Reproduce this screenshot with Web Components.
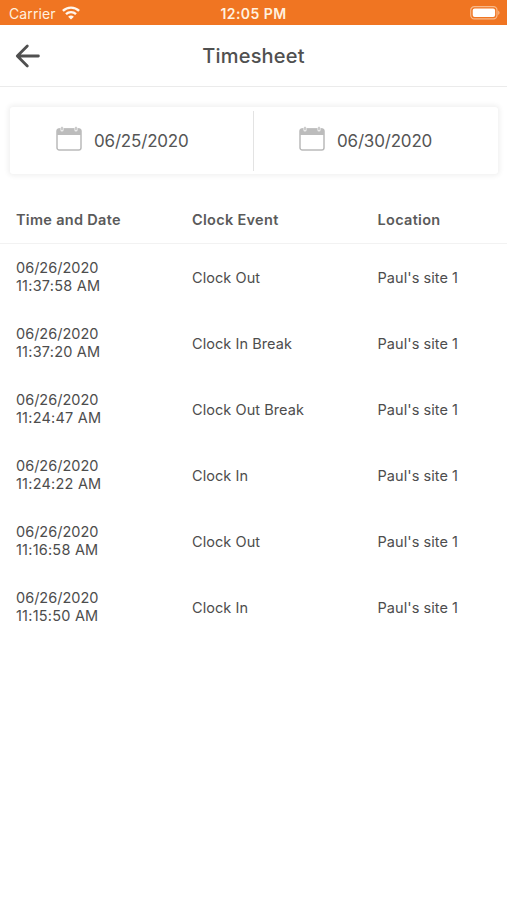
<!DOCTYPE html>
<html lang="en">
<head>
<meta charset="utf-8">
<title>Timesheet</title>
<style>
html, body { margin: 0; height: 100%; background: #fff; }
body { font-family: Inter, "Liberation Sans", sans-serif; color: #505050; overflow: hidden; }
</style>
</head>
<body>
<timesheet-app></timesheet-app>
<script>
const define = (name, html) => customElements.define(name, class extends HTMLElement {
  constructor() {
    super();
    this.attachShadow({ mode: 'open' }).innerHTML = html;
  }
});

define('status-bar', `
<style>
:host { display: grid; grid-template-columns: 1fr auto 1fr; align-items: center; height: 25px; padding: 1px 7px 0 9px; box-sizing: border-box; background: #f07522; color: #fff0df; font-size: 14px; }
.left { display: flex; align-items: center; gap: 6px; letter-spacing: .1px; }
.time { font-weight: 600; font-size: 14px; letter-spacing: .45px; padding: 1px 2px 0 0; }
.battery { justify-self: end; display: block; }
svg { display: block; }
</style>
<div class="left"><span>Carrier</span>
<svg width="18" height="14" viewBox="0 0 18 14" fill="none" stroke="#fff7ee" stroke-width="2.4"><path d="M.9 4.9a11.6 11.6 0 0 1 16.2 0M4 8.1a7.2 7.2 0 0 1 10 0"/><path d="M9 13.6 6.1 10.8a4.2 4.2 0 0 1 5.8 0Z" fill="#fff7ee" stroke="none"/></svg></div>
<span class="time">12:05 PM</span>
<svg class="battery" width="30" height="14" viewBox="0 0 30 14"><rect x=".7" y=".7" width="26.3" height="12.2" rx="3.6" fill="none" stroke="#f8b98b" stroke-width="1.2"/><rect x="2.7" y="2.6" width="22.4" height="8.4" rx="2" fill="#fff"/><path d="M28.2 4.6c1.8.7 1.8 3.8 0 4.5z" fill="#f8b98b"/></svg>`);

define('nav-header', `
<style>
:host { display: grid; grid-template-columns: 1fr auto 1fr; align-items: center; height: 62px; padding: 0 15px; box-sizing: border-box; border-bottom: 1px solid #ebebeb; }
svg { display: block; }
h1 { margin: 0; font-size: 20px; font-weight: 500; line-height: 24px; letter-spacing: .22px; color: #505050; }
</style>
<svg width="26" height="24" viewBox="0 0 26 24" fill="none" stroke="#505050" stroke-width="2.8" stroke-linecap="round" stroke-linejoin="round"><path d="M12.3 2 2.3 12l10 10M2.6 12h20.8"/></svg>
<h1><slot></slot></h1>`);

define('date-field', `
<style>
:host { display: flex; align-items: center; gap: 12px; padding-left: 46px; box-sizing: border-box; font-size: 17px; line-height: 22px; letter-spacing: -.18px; color: #555; }
svg { display: block; margin-bottom: 5px; }
</style>
<svg width="26" height="25" viewBox="0 0 26 25"><rect x="1" y="3" width="24" height="21" rx="2.3" fill="#fff" stroke="#bababa" stroke-width="1.5"/><path d="M1 9V5a2.4 2.4 0 0 1 2.4-2.4h19.2A2.4 2.4 0 0 1 25 5v4z" fill="#bcbcbc"/><g stroke-linecap="round"><path d="M6 2.2v1.8M20 2.2v1.8" stroke="#eee" stroke-width="3.2"/><path d="M6 1.5v2M20 1.5v2" stroke="#bdbdbd" stroke-width="1.4"/></g></svg>
<span><slot></slot></span>`);

define('date-range', `
<style>
:host { display: grid; grid-template-columns: 243px 1px 1fr; height: 67px; margin: 20px 9px 0 10px; border-radius: 3px; background: #fff; box-shadow: 0 0 5px 2px #0000000f; }
.rule { margin: 4px 0 3px; background: #e3e3e3; }
::slotted([slot="to"]) { margin-left: -1px; }
</style>
<slot name="from"></slot><i class="rule"></i><slot name="to"></slot>`);

define('table-head', `
<style>
:host { display: grid; grid-template-columns: 176px 185.5px 1fr; align-items: center; height: 48px; margin-top: 21px; padding-left: 16px; box-sizing: content-box; border-bottom: 1px solid #f2f2f2; font-size: 14.5px; font-weight: 600; letter-spacing: .3px; color: #5a5a5a; }
</style>
<span>Time and Date</span><span>Clock Event</span><span>Location</span>`);

customElements.define('time-entry', class extends HTMLElement {
  constructor() {
    super();
    this.attachShadow({ mode: 'open' }).innerHTML = `
<style>
:host { display: grid; grid-template-columns: 176px 185.5px 1fr; align-items: center; height: 66px; padding-left: 16px; font-size: 14.5px; line-height: 18px; letter-spacing: .06px; color: #4d4d4d; }
.when { display: flex; flex-direction: column; }
.date { letter-spacing: 0; }
.time { letter-spacing: .22px; }
.cell { padding-top: 2px; }
</style>
<div class="when"><span class="date">${this.getAttribute('date')}</span><span class="time">${this.getAttribute('time')}</span></div>
<span class="cell">${this.getAttribute('event')}</span>
<span class="cell"><slot></slot></span>`;
  }
});

define('timesheet-app', `
<style>
:host { display: flex; flex-direction: column; height: 100vh; }
</style>
<status-bar></status-bar>
<nav-header>Timesheet</nav-header>
<date-range><date-field slot="from">06/25/2020</date-field><date-field slot="to">06/30/2020</date-field></date-range>
<table-head></table-head>
<div class="rows">
<time-entry date="06/26/2020" time="11:37:58 AM" event="Clock Out">Paul's site 1</time-entry>
<time-entry date="06/26/2020" time="11:37:20 AM" event="Clock In Break">Paul's site 1</time-entry>
<time-entry date="06/26/2020" time="11:24:47 AM" event="Clock Out Break">Paul's site 1</time-entry>
<time-entry date="06/26/2020" time="11:24:22 AM" event="Clock In">Paul's site 1</time-entry>
<time-entry date="06/26/2020" time="11:16:58 AM" event="Clock Out">Paul's site 1</time-entry>
<time-entry date="06/26/2020" time="11:15:50 AM" event="Clock In">Paul's site 1</time-entry>
</div>`);
</script>
</body>
</html>
